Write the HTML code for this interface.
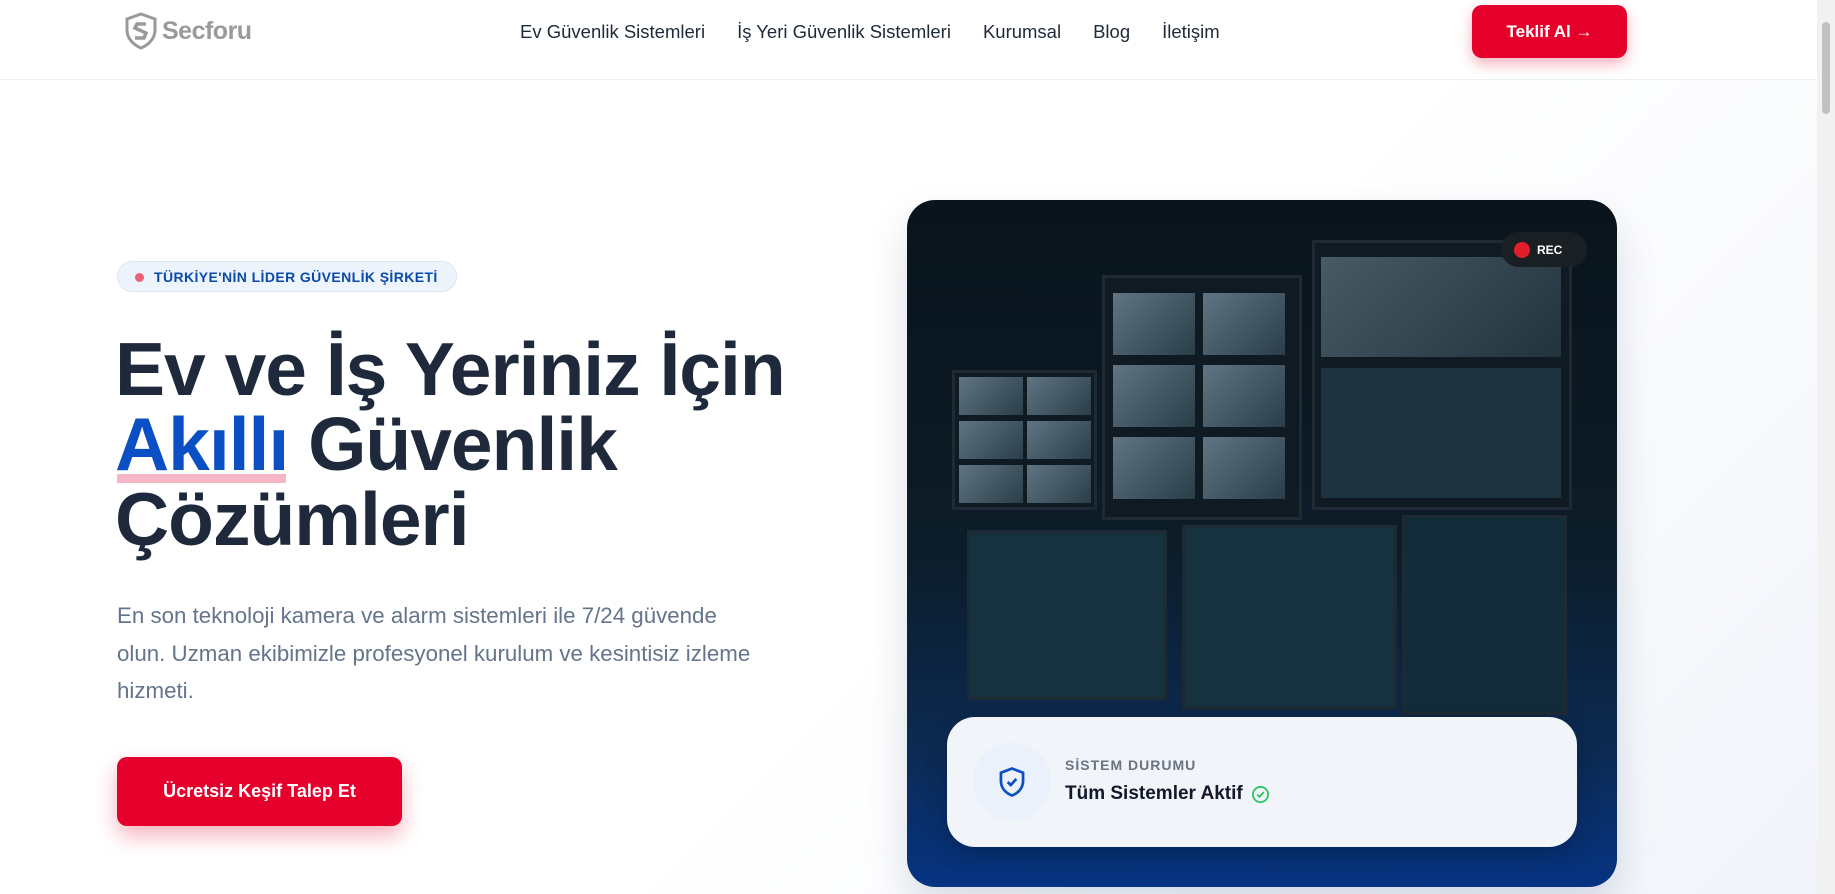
<!DOCTYPE html>
<html><head><meta charset="utf-8"><style>
*{margin:0;padding:0;box-sizing:border-box}
body{width:1835px;height:894px;overflow:hidden;font-family:"Liberation Sans",sans-serif;background:linear-gradient(135deg,#fff 55%,#f1f4fa 100%);position:relative}
.hdr{position:absolute;left:0;top:0;width:1817px;height:80px;background:#fff;border-bottom:1px solid #eef0f3}
.logo{position:absolute;left:124px;top:12px;display:flex;align-items:center;gap:4px;color:#9a9a9a;font-weight:bold;font-size:25px;letter-spacing:-0.5px}
.nav{position:absolute;top:21px;left:520px;display:flex;gap:32px;font-size:18.5px;color:#1f2937}
.tbtn{position:absolute;left:1472px;top:5px;width:155px;height:53px;background:#e4002b;border-radius:10px;color:#fff;font-weight:bold;font-size:17px;display:flex;align-items:center;justify-content:center;box-shadow:0 6px 14px rgba(228,0,43,.3)}
.badge{position:absolute;left:117px;top:261px;width:340px;height:31px;border-radius:16px;background:#eef4fc;border:1px solid #dbe6f5;font-size:14px;font-weight:bold;color:#0b4aa8;display:flex;align-items:center;padding-left:36px;letter-spacing:.4px}
.badge:before{content:"";position:absolute;left:17px;top:11px;width:9px;height:9px;border-radius:50%;background:#e8627a}
h1{position:absolute;left:115px;top:332px;font-size:75px;line-height:75px;font-weight:900;color:#1e293b;letter-spacing:-1px}
.ak{color:#0b4fc4;position:relative}
.ak:after{content:"";position:absolute;left:2px;right:2px;bottom:3px;height:9px;background:#f4b6c4;z-index:-1}
p.d{position:absolute;left:117px;top:597px;width:645px;font-size:22.3px;line-height:37.5px;color:#64748b}
.cbtn{position:absolute;left:117px;top:757px;width:285px;height:69px;background:#e4002b;border-radius:10px;color:#fff;font-weight:bold;font-size:18px;display:flex;align-items:center;justify-content:center;box-shadow:0 10px 22px rgba(228,0,43,.3)}
.img{position:absolute;left:907px;top:200px;width:710px;height:687px;border-radius:28px;overflow:hidden;background:linear-gradient(180deg,#0a141c 0%,#0c1c28 50%,#0c2a52 80%,#063382 100%);box-shadow:0 20px 40px rgba(15,40,90,.15)}
.s{position:absolute;background:#0f1a22;border:3px solid #1e2a33}
.s i{position:absolute;background:linear-gradient(135deg,#6e8592,#2f4451);opacity:.85}
.rec{position:absolute;left:1501px;top:232px;width:86px;height:35px;border-radius:18px;background:#1a1f24;color:#fff;font-size:12px;font-weight:bold;display:flex;align-items:center;padding-left:13px;gap:7px}
.rec b{width:16px;height:16px;border-radius:50%;background:#e11d2a;display:inline-block}
.st{position:absolute;left:947px;top:717px;width:630px;height:130px;border-radius:28px;background:#f1f4f8;box-shadow:0 8px 24px rgba(0,0,0,.2)}
.ic{position:absolute;left:26px;top:26px;width:78px;height:78px;border-radius:50%;background:#eaf1fb;display:flex;align-items:center;justify-content:center}
.st .l1{position:absolute;left:118px;top:40px;font-size:14px;font-weight:bold;color:#6b7280;letter-spacing:1px}
.st .l2{position:absolute;left:118px;top:66px;font-size:19px;font-weight:bold;color:#111827;display:flex;align-items:center;gap:8px}
.sb{position:absolute;right:0;top:0;width:18px;height:894px;background:#f1f1f1}
.sb:after{content:"";position:absolute;left:5px;top:22px;width:8px;height:92px;background:#c1c1c1;border-radius:4px}
</style></head><body>
<div class="hdr">
<div class="logo"><svg width="34" height="38" viewBox="0 0 34 38"><path d="M17 2 L31 7 V18 C31 27 24 33 17 36 C10 33 3 27 3 18 V7 Z" fill="none" stroke="#9a9a9a" stroke-width="3"/><path d="M22 12 H13 L11 16 L22 21 L20 26 H11" fill="none" stroke="#9a9a9a" stroke-width="3.5"/></svg>Secforu</div>
<div class="nav"><span>Ev Güvenlik Sistemleri</span><span>İş Yeri Güvenlik Sistemleri</span><span>Kurumsal</span><span>Blog</span><span>İletişim</span></div>
<div class="tbtn">Teklif Al →</div>
</div>
<div class="badge">TÜRKİYE'NİN LİDER GÜVENLİK ŞİRKETİ</div>
<h1>Ev ve İş Yeriniz İçin<br><span class="ak">Akıllı</span> Güvenlik<br>Çözümleri</h1>
<p class="d">En son teknoloji kamera ve alarm sistemleri ile 7/24 güvende olun. Uzman ekibimizle profesyonel kurulum ve kesintisiz izleme hizmeti.</p>
<div class="cbtn">Ücretsiz Keşif Talep Et</div>
<div class="img">
<div class="s" style="left:45px;top:170px;width:145px;height:140px"><i style="left:4px;top:4px;width:64px;height:38px"></i><i style="left:72px;top:4px;width:64px;height:38px"></i><i style="left:4px;top:48px;width:64px;height:38px"></i><i style="left:72px;top:48px;width:64px;height:38px"></i><i style="left:4px;top:92px;width:64px;height:38px"></i><i style="left:72px;top:92px;width:64px;height:38px"></i></div>
<div class="s" style="left:195px;top:75px;width:200px;height:245px"><i style="left:8px;top:15px;width:82px;height:62px"></i><i style="left:98px;top:15px;width:82px;height:62px"></i><i style="left:8px;top:87px;width:82px;height:62px"></i><i style="left:98px;top:87px;width:82px;height:62px"></i><i style="left:8px;top:159px;width:82px;height:62px"></i><i style="left:98px;top:159px;width:82px;height:62px"></i></div>
<div class="s" style="left:405px;top:40px;width:260px;height:270px"><i style="left:6px;top:14px;width:240px;height:100px;opacity:.6"></i><div style="position:absolute;left:6px;top:125px;width:240px;height:130px;background:#1d3340"></div></div>
<div class="s" style="left:60px;top:330px;width:200px;height:170px;background:#16323f"></div>
<div class="s" style="left:275px;top:325px;width:215px;height:185px;background:#16323f"></div>
<div class="s" style="left:495px;top:315px;width:165px;height:200px;background:#122c3a"></div>
</div>
<div class="rec"><b></b>REC</div>
<div class="st">
<div class="ic"><svg width="30" height="32" viewBox="0 0 24 26"><path d="M12 2 L21 5.5 V12 C21 18 17 22 12 24 C7 22 3 18 3 12 V5.5 Z" fill="none" stroke="#0b4fc4" stroke-width="2.2" stroke-linejoin="round"/><path d="M8.5 13 L11 15.5 L15.5 10.5" fill="none" stroke="#0b4fc4" stroke-width="2.2"/></svg></div>
<div class="l1">SİSTEM DURUMU</div>
<div class="l2">Tüm Sistemler Aktif <svg width="19" height="19" viewBox="0 0 20 20"><circle cx="10" cy="10" r="8" fill="none" stroke="#22c55e" stroke-width="1.8"/><path d="M6.5 10 L9 12.5 L13.5 7.5" fill="none" stroke="#22c55e" stroke-width="1.8"/></svg></div>
</div>
<div class="sb"></div>
</body></html>
